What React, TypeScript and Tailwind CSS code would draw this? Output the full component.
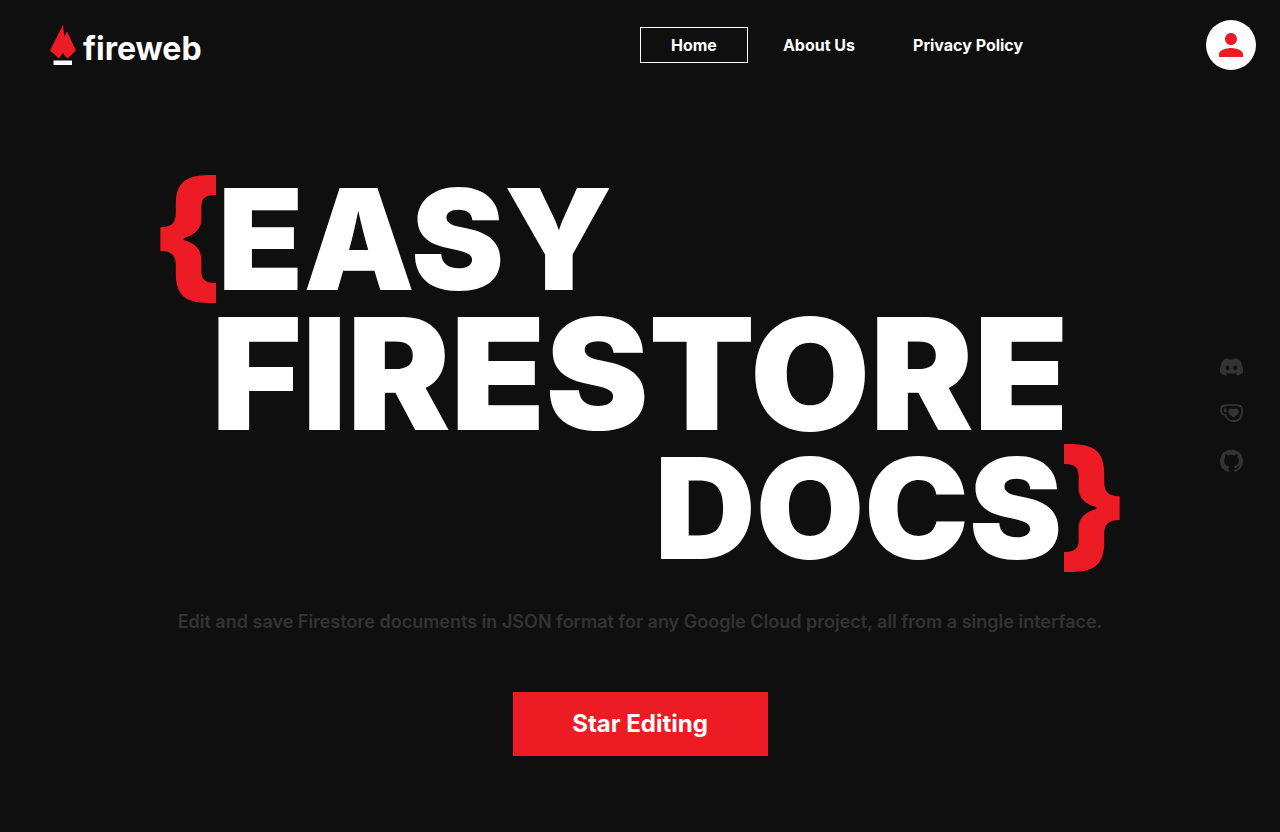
import { BsDiscord, BsGithub } from "react-icons/bs";
import { MdPerson } from "react-icons/md";

function KofiIcon({ className }: { className?: string }) {
  return (
    <svg viewBox="0 1 24 24" fill="currentColor" className={className} aria-hidden="true">
      <path d="M11.351 2.715c-2.7 0-4.986.025-6.83.26C2.078 3.285 0 5.154 0 8.61c0 3.506.182 6.13 1.585 8.493 1.584 2.701 4.233 4.182 7.662 4.182h.83c4.209 0 6.494-2.234 7.637-4a9.5 9.5 0 0 0 1.091-2.338C21.792 14.688 24 12.22 24 9.208v-.415c0-3.247-2.13-5.507-5.792-5.87-1.558-.156-2.65-.208-6.857-.208m0 1.947c4.208 0 5.09.052 6.571.182 2.624.311 4.13 1.584 4.13 4v.39c0 2.156-1.792 3.844-3.87 3.844h-.935l-.156.649c-.208 1.013-.597 1.818-1.039 2.546-.909 1.428-2.545 3.064-5.922 3.064h-.805c-2.571 0-4.831-.883-6.078-3.195-1.09-2-1.298-4.155-1.298-7.506 0-2.181.857-3.402 3.012-3.714 1.533-.233 3.559-.26 6.39-.26m6.547 2.287c-.416 0-.65.234-.65.546v2.935c0 .311.234.545.65.545 1.324 0 2.051-.754 2.051-2s-.727-2.026-2.052-2.026m-10.39.182c-1.818 0-3.013 1.48-3.013 3.142 0 1.533.858 2.857 1.949 3.897.727.701 1.87 1.429 2.649 1.896a1.47 1.47 0 0 0 1.507 0c.78-.467 1.922-1.195 2.623-1.896 1.117-1.039 1.974-2.364 1.974-3.897 0-1.662-1.247-3.142-3.039-3.142-1.065 0-1.792.545-2.338 1.298-.493-.753-1.246-1.298-2.312-1.298" />
    </svg>
  );
}

const socials = [
  { label: "Discord", Icon: BsDiscord },
  { label: "Ko-fi", Icon: KofiIcon },
  { label: "GitHub", Icon: BsGithub },
];

function Logo() {
  return (
    <a href="#" className="flex items-end gap-[7px]">
      <svg viewBox="0 0 26 40" className="h-10 w-[26px]" aria-hidden="true">
        <path
          d="M13 0 14.3 11.5 17 6.5 26 25.5 18 33 16 32.5 13 28 9 33.5 0 25.5Z"
          fill="#ed1c24"
        />
        <path d="M3.5 35.5h18.5V40H3.5z" fill="#fff" />
      </svg>
      <span className="text-[32px] leading-8 font-bold">fireweb</span>
    </a>
  );
}

export default function App() {
  return (
    <div className="flex min-h-screen flex-col bg-[#0f0f0f] font-['Inter',sans-serif] text-white">
      <header className="grid grid-cols-2 items-center py-5 pr-6 pl-[50px]">
        <Logo />
        <div className="flex items-center justify-between">
          <nav className="-ml-[13px] flex items-center gap-1 font-bold">
            <a href="#" className="border border-white px-[30px] py-[5px]">
              Home
            </a>
            <a href="#" className="border border-transparent px-[30px] py-[5px]">
              About Us
            </a>
            <a href="#" className="border border-transparent px-[22px] py-[5px]">
              Privacy Policy
            </a>
          </nav>
          <button
            type="button"
            aria-label="Account"
            className="flex size-[50px] items-center justify-center rounded-full bg-white text-[#ed1c24]"
          >
            <MdPerson className="size-9" />
          </button>
        </div>
      </header>

      <main className="flex flex-col items-center pt-[83px]">
        <h1 className="flex w-[75%] flex-col font-black [font-feature-settings:'case']">
          <span className="text-[140px] leading-[132px]">
            <span className="-mr-1 -ml-[9px] text-[#ed1c24]">{"{"}</span>EASY
          </span>
          <span className="text-center text-[155px] leading-[137px]">FIRESTORE</span>
          <span className="text-right text-[140px] leading-[132px]">
            DOCS<span className="-mr-[9px] -ml-1 text-[#ed1c24]">{"}"}</span>
          </span>
        </h1>
        <p className="mt-[34px] text-lg font-semibold text-[#333333]">
          Edit and save Firestore documents in JSON format for any Google Cloud project, all from a
          single interface.
        </p>
        <button type="button" className="mt-14 h-16 w-[255px] bg-[#ed1c24] text-2xl font-bold">
          Star Editing
        </button>
      </main>

      <aside className="fixed top-1/2 right-[37px] flex -translate-y-1/2 flex-col gap-6 pb-1 text-[#333333]">
        {socials.map(({ label, Icon }) => (
          <a key={label} href="#" aria-label={label}>
            <Icon className="size-[23px] -scale-x-100" />
          </a>
        ))}
      </aside>
    </div>
  );
}
